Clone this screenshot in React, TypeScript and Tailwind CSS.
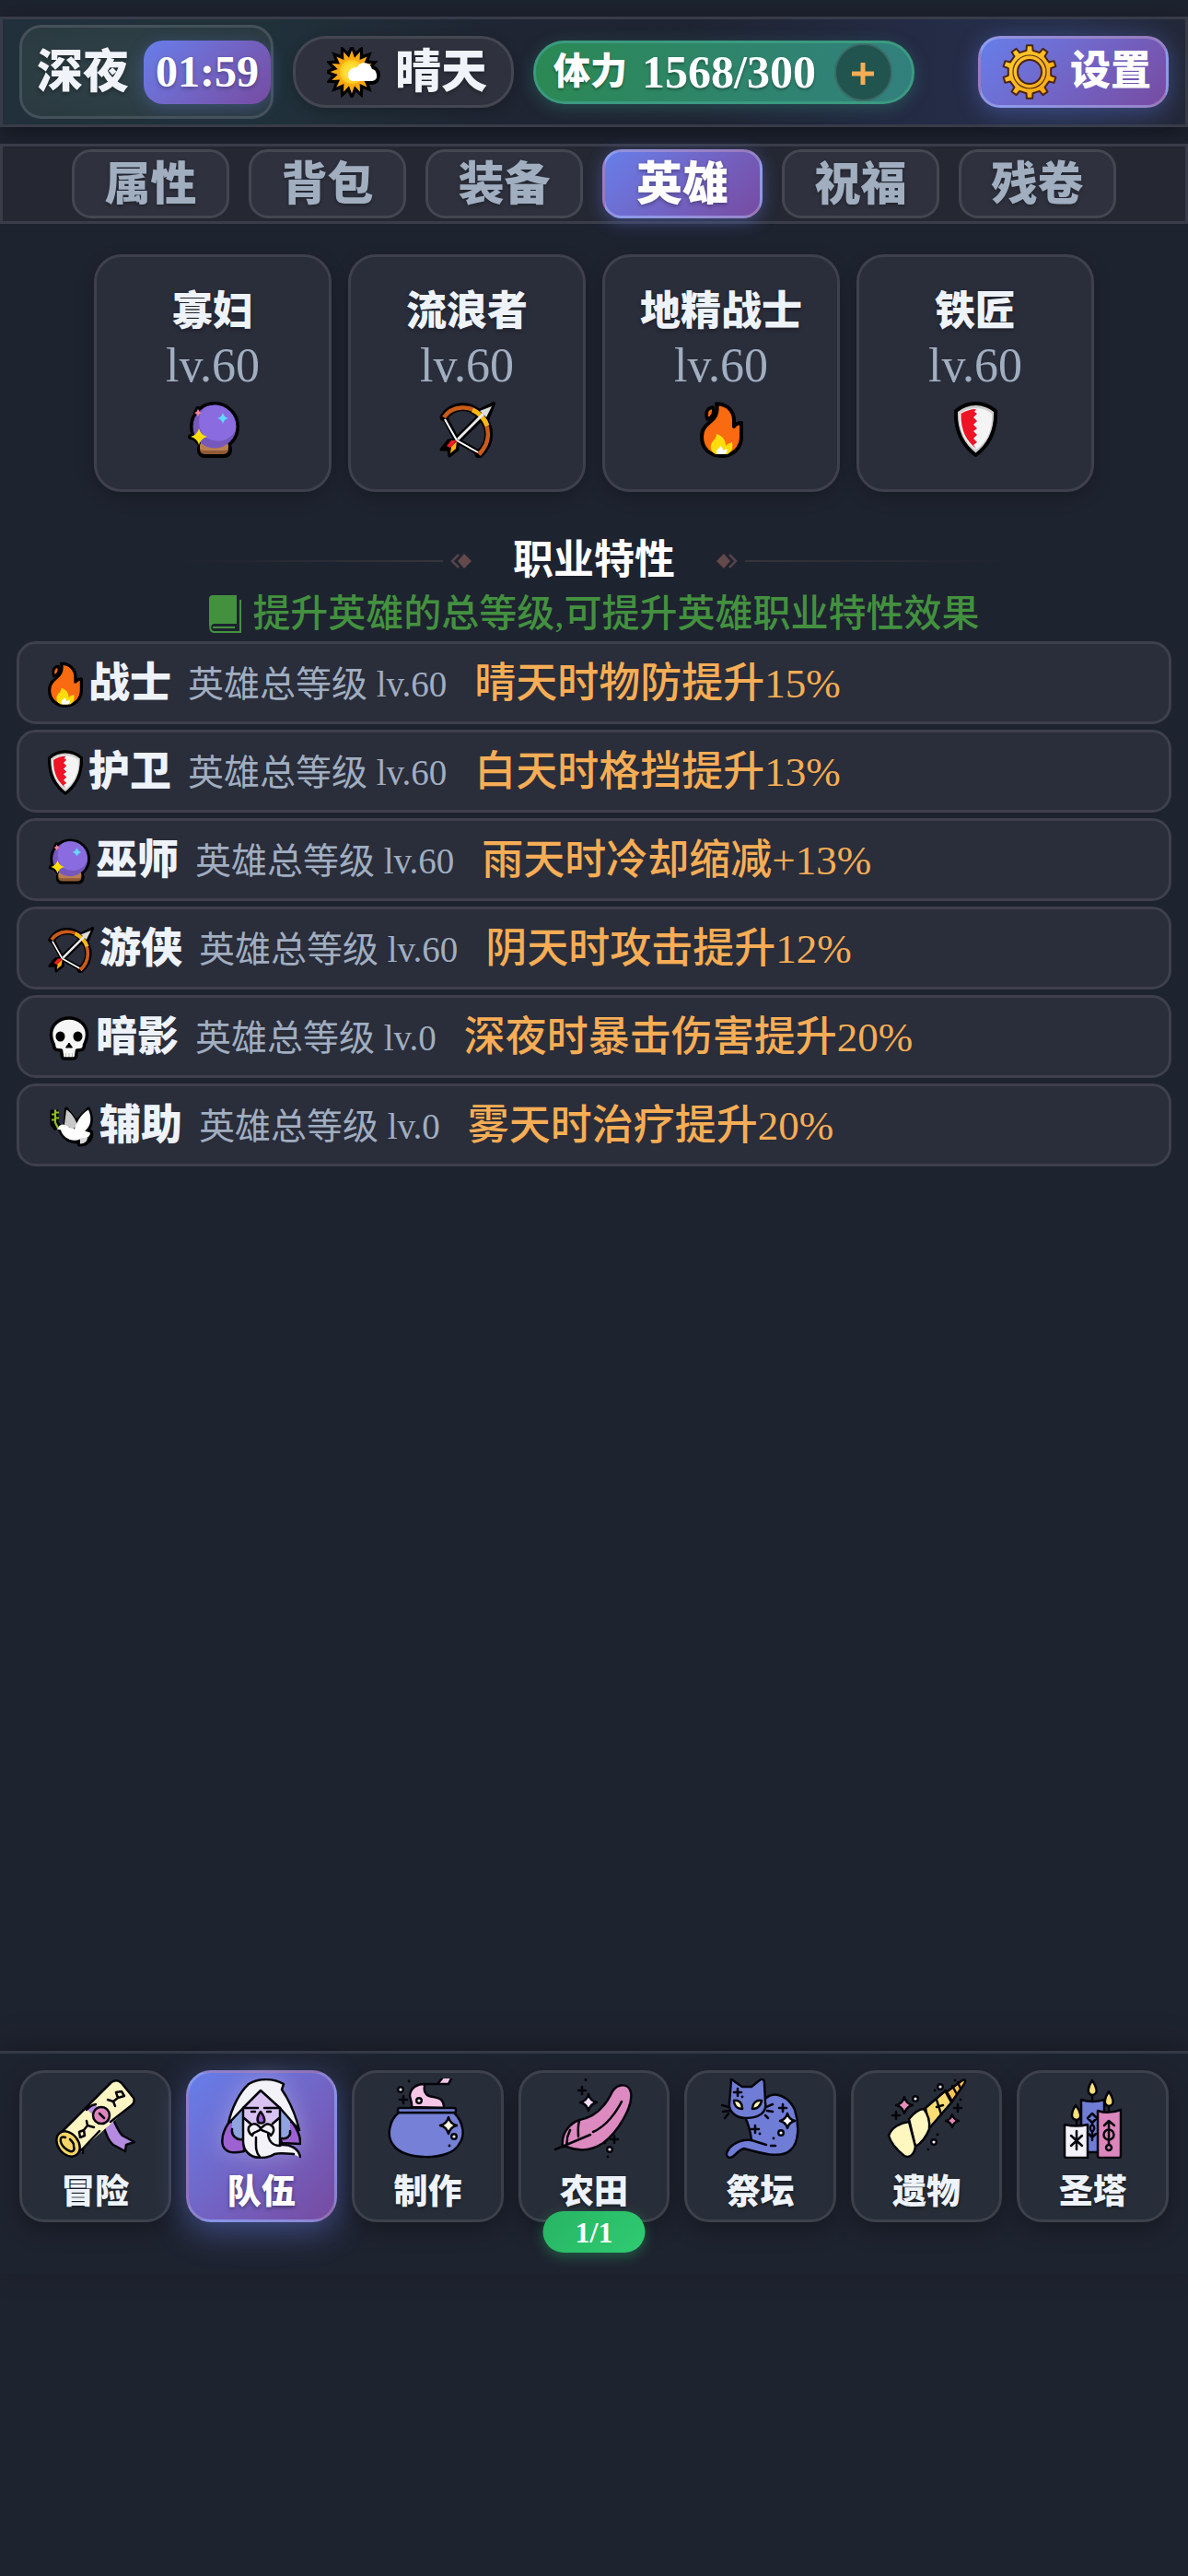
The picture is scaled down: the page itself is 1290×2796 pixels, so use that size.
import React from 'react';

type IconProps = { className?: string };

/* ---------- shared shapes ---------- */

function ring(count: number, outer: number, inner: number, cx: number, cy: number) {
  const points: string[] = [];
  for (let i = 0; i < count * 2; i++) {
    const r = i % 2 === 0 ? outer : inner;
    const a = (Math.PI * i) / count - Math.PI / 2;
    points.push(`${(cx + r * Math.cos(a)).toFixed(2)},${(cy + r * Math.sin(a)).toFixed(2)}`);
  }
  return points.join(' ');
}

function gearPoints(teeth: number, outer: number, inner: number, cx: number, cy: number) {
  const points: string[] = [];
  const step = (Math.PI * 2) / teeth;
  for (let i = 0; i < teeth; i++) {
    const mid = i * step - Math.PI / 2;
    const corners: [number, number][] = [
      [inner, -0.24],
      [outer, -0.17],
      [outer, 0.17],
      [inner, 0.24],
    ];
    corners.forEach(([r, k]) => {
      const a = mid + step * k;
      points.push(`${(cx + r * Math.cos(a)).toFixed(2)},${(cy + r * Math.sin(a)).toFixed(2)}`);
    });
  }
  return points.join(' ');
}

function Sparkle({ x, y, r, fill, stroke, sw = 0 }: { x: number; y: number; r: number; fill: string; stroke?: string; sw?: number }) {
  const k = r * 0.2;
  return (
    <path
      d={`M${x} ${y - r}Q${x + k} ${y - k} ${x + r} ${y}Q${x + k} ${y + k} ${x} ${y + r}Q${x - k} ${y + k} ${x - r} ${y}Q${x - k} ${y - k} ${x} ${y - r}Z`}
      fill={fill}
      stroke={stroke}
      strokeWidth={sw}
      strokeLinejoin="round"
    />
  );
}

function Plus({ x, y, r = 4 }: { x: number; y: number; r?: number }) {
  return <path d={`M${x - r} ${y}H${x + r}M${x} ${y - r}V${y + r}`} stroke="#05050c" strokeWidth="2.6" strokeLinecap="round" />;
}

function Bubble({ x, y }: { x: number; y: number }) {
  return <circle cx={x} cy={y} r="2.8" fill="#f4f0fa" stroke="#05050c" strokeWidth="2.4" />;
}

function Dot({ x, y }: { x: number; y: number }) {
  return <circle cx={x} cy={y} r="1.4" fill="#05050c" stroke="none" />;
}

/* ---------- class and weather icons ---------- */

function SunIcon({ className }: IconProps) {
  return (
    <svg viewBox="0 0 58 55" className={className} aria-hidden="true">
      <defs>
        <radialGradient id="sunCore">
          <stop offset="0.5" stopColor="#ffe23a" />
          <stop offset="1" stopColor="#ffc81e" />
        </radialGradient>
      </defs>
      <polygon points={ring(16, 25, 18, 27, 27)} fill="#000" stroke="#000" strokeWidth="5" strokeLinejoin="miter" />
      <path d="M28 38H49Q55 37 55 30Q54 24 49 23Q47 16 40 16Q34 17 33 22Q24 22 23 30Q23 37 28 38Z" stroke="#000" strokeWidth="6" />
      <polygon points={ring(16, 23.5, 15.5, 27, 27)} fill="#fba912" />
      <circle cx="27" cy="27" r="13" fill="url(#sunCore)" />
      <path d="M28 37H49Q55 36 54 30Q53 24 49 24Q47 17 40 17Q34 18 33 22Q24 22 23 30Q23 37 28 37Z" fill="#fff" />
    </svg>
  );
}

function GearIcon({ className }: IconProps) {
  return (
    <svg viewBox="0 0 60 60" className={className} aria-hidden="true">
      <defs>
        <linearGradient id="gearGold" x1="0" y1="0" x2="1" y2="1">
          <stop offset="0" stopColor="#ffcf33" />
          <stop offset="1" stopColor="#f5a30f" />
        </linearGradient>
      </defs>
      <path
        d={`M${gearPoints(10, 29, 23.5, 30, 30).split(' ').join('L')}ZM30 17A13 13 0 1 0 30 43A13 13 0 1 0 30 17Z`}
        fill="url(#gearGold)"
        fillRule="evenodd"
        stroke="#4a2312"
        strokeWidth="2"
        strokeLinejoin="round"
      />
      <circle cx="30" cy="30" r="18" fill="none" stroke="#5a2d12" strokeWidth="1.2" />
    </svg>
  );
}

function CrystalIcon({ className }: IconProps) {
  return (
    <svg viewBox="0 0 57 61" className={className} aria-hidden="true">
      <g fill="#000" stroke="#000" strokeWidth="8" strokeLinejoin="round">
        <circle cx="30" cy="27" r="23" />
        <rect x="15" y="47" width="30" height="10" rx="4" />
        <path d="M12 8L14 11L12 15L10 12ZM13 31L15 37L20 38L14 41L13 44L10 40L4 38L10 36Z" strokeWidth="6" />
      </g>
      <rect x="14" y="45" width="31" height="12" rx="5" fill="#8f5a35" />
      <rect x="14" y="44" width="31" height="9" rx="4" fill="#b97f51" />
      <circle cx="30" cy="27" r="23.5" fill="#7658bd" />
      <path d="M20 6C9 15 12 35 23 40C34 46 48 42 53 30C55 12 38-2 20 6Z" fill="#8a6ce0" />
      <Sparkle x={12} y={12} r={4} fill="#f4839c" />
      <Sparkle x={39} y={18} r={6} fill="#5edcff" />
      <Sparkle x={13} y={38} r={9} fill="#ffde0a" />
    </svg>
  );
}

function BowIcon({ className }: IconProps) {
  return (
    <svg viewBox="0 0 61 61" className={className} fill="none" aria-hidden="true">
      <g stroke="#000" strokeLinejoin="round">
        <path d="M5 17C14 3 33 2 44 14C57 27 57 45 43 57" strokeWidth="9" strokeLinecap="round" />
        <path d="M7 19L19 42L42 55" strokeWidth="6" />
        <path d="M19 42L49 13" strokeWidth="8" />
        <path d="M59 2L43 10L52 20Z" fill="#000" strokeWidth="4" />
        <path d="M2 52L10 42L20 41L20 52L11 59L10 52Z" fill="#000" strokeWidth="3" />
      </g>
      <path d="M5 17C14 4 33 3 44 14C56 27 56 45 43 57" stroke="#cb5b18" strokeWidth="4.5" />
      <path d="M36 9C43 12 50 19 52 26" stroke="#fbb914" strokeWidth="5" />
      <path d="M6 19L19 42L42 55" stroke="#fff" strokeWidth="2" />
      <path d="M20 41L48 13" stroke="#ececec" strokeWidth="3" />
      <path d="M57 5L44 10L51 17Z" fill="#dcdcdc" />
      <path d="M8 48L13 42L19 42L14 48L12 50Z" fill="#ed1c24" />
      <path d="M19 43L18 51L12 56L13 49Z" fill="#ffb017" />
      <path d="M43 57L46 54" stroke="#cb5b18" strokeWidth="4.5" />
    </svg>
  );
}

function FlameIcon({ className }: IconProps) {
  return (
    <svg viewBox="0 0 47 61" className={className} aria-hidden="true">
      <path d="M14 6C7 7 6 13 8 19C14 17 16 12 14 6Z" fill="#fa6a10" stroke="#000" strokeWidth="3.5" strokeLinejoin="round" />
      <path
        d="M18 2.500C30 2 37 11 37 20L37 27C39 24 41 23 45 23L45 38C45 50 36 59 24 59C11 59 2 51 2 38C2 25 13 23 17 15C19 11 19 7 18 2.500Z"
        fill="#fa6a10"
        stroke="#000"
        strokeWidth="4"
        strokeLinejoin="round"
      />
      <path d="M18 35C25 37 28 42 28 48C30 45 33 45 35 44C36 50 35 54 30 57L17 57C11 54 10 48 14 43C16 41 18 39 18 35Z" fill="#ffdd0a" />
      <path d="M22 48C24 49 25 51 25 53C27 52 28 52 29 51C30 54 29 56 27 57L19 57C17 54 18 52 20 51C21 50 22 49 22 48Z" fill="#fff" />
    </svg>
  );
}

function ShieldIcon({ className }: IconProps) {
  return (
    <svg viewBox="0 0 47 61" className={className} aria-hidden="true">
      <path d="M23.500 2C32 2 39 5 45 10C46 34 37 48 23.500 58C10 48 1 34 2 10C8 5 15 2 23.500 2Z" fill="#cfcfcf" stroke="#000" strokeWidth="4" strokeLinejoin="round" />
      <path d="M23.500 7C30 7 36 9 41 13C42 33 34 45 23.500 52C13 45 5 33 6 13C11 9 17 7 23.500 7Z" fill="#f4f4f4" />
      <path d="M24 8C18 8 12 10 7.500 13C7 32 14 43 24 51L21 47L25 44L21 40L25 36L21 32L25 29L21 25L25 21L21 17L25 13L22 11Z" fill="#ee1325" />
    </svg>
  );
}

function SkullIcon({ className }: IconProps) {
  return (
    <svg viewBox="0 0 43 48" className={className} aria-hidden="true">
      <path
        d="M21.500 2C33 2 41 10 41 20C41 26 39 28 38 31C38 36 36 37 30 37L29 44Q28 46 26 46L17 46Q14 46 14 44L13 37C7 37 5 36 5 31C4 28 2 26 2 20C2 10 10 2 21.500 2Z"
        fill="#f6f6f6"
        stroke="#000"
        strokeWidth="3.500"
        strokeLinejoin="round"
      />
      <ellipse cx="12" cy="22" rx="5" ry="5.500" />
      <ellipse cx="31" cy="22" rx="5" ry="5.500" />
      <path d="M21.500 29L25 34L22 34L21 34L18 34Z" stroke="#000" strokeLinejoin="round" />
      <path d="M18 40V44M21.500 40V44M25 40V44" stroke="#bcbcbc" strokeWidth="1" />
    </svg>
  );
}

function DoveIcon({ className }: IconProps) {
  return (
    <svg viewBox="0 0 50 45" className={className} aria-hidden="true">
      <g fill="#000" stroke="#000" strokeWidth="4" strokeLinejoin="round">
        <path d="M20 3L31 17L44 3C49 12 47 22 43 26L47 28C48 33 46 37 43 39C42 41 40 42 34 42L33 39C22 39 16 33 13 25L19 20Z" />
        <path d="M7 4V19L11 24" fill="none" strokeWidth="9" />
      </g>
      <path d="M20 4C26 8 30 14 32 21L27 25L18 20Z" fill="#c8c8c8" />
      <path d="M10 25C12 20 18 18 23 23L29 25C31 17 37 8 44 4C48 13 47 22 40 27L46 29C46 32 44 34 41 35L35 36C26 40 16 34 14 26Z" fill="#fff" />
      <path d="M35 35L43 34C43 38 40 41 35 41Z" fill="#dadada" />
      <path d="M8 4V18L11 24M4 9H8M4 15H8M8 7H12M8 13H12" fill="none" stroke="#8dc21f" strokeWidth="2.200" />
    </svg>
  );
}

function BookIcon({ className }: IconProps) {
  return (
    <svg viewBox="0 0 36 41" className={className} fill="none" aria-hidden="true">
      <path d="M5 0H31V31H7C4 31 2 32 1 34V4Q1 0 5 0Z" fill="currentColor" />
      <path d="M31 30H6C1 31 1 39 6 40H35V5" stroke="currentColor" strokeWidth="2" />
      <path d="M5 35H29" stroke="currentColor" strokeWidth="2" />
    </svg>
  );
}

/* ---------- bottom navigation icons ---------- */

function ScrollIcon({ className }: IconProps) {
  return (
    <svg viewBox="0 0 87 87" className={className} fill="none" stroke="#05050c" strokeWidth="2.500" strokeLinecap="round" strokeLinejoin="round" aria-hidden="true">
      <path d="M52 50C55 61 59 69 63 72L76 79L77 72L86 69L73 62C68 57 65 49 62 42Z" fill="#b48be0" />
      <path d="M4 61L61 3Q67 0 72 5L85 21Q87 26 83 29L30 76V81L26 77Z" fill="#fdf6c3" stroke="none" />
      <path d="M4 61L61 4Q67 0 72 5L85 21Q87 26 83 29L60 47M48 57L30 76M30 81V76L26 79" />
      <path d="M34 33L43 28L60 46L52 51Z" fill="#b48be0" stroke="none" />
      <path d="M34 34Q38 29 44 28" />
      <circle cx="50" cy="40" r="9" fill="#dc86bd" />
      <path d="M48 38L53 43" />
      <ellipse cx="14" cy="71" rx="11" ry="15" transform="rotate(-38 14 71)" fill="#f7d667" />
      <path d="M11 64C4 61 4 70 11 76C17 81 22 80 20 73M16 66C18 68 20 70 20 72" />
      <path d="M66 15L72 14L75 19L68 21ZM68 21L63 25L57 23M63 25L65 30" />
      <path d="M26 58L31 56L32 62L27 64ZM31 56L35 51L42 53M35 51L34 46" />
    </svg>
  );
}

function WizardIcon({ className }: IconProps) {
  return (
    <svg viewBox="0 0 87 87" className={className} fill="none" stroke="#05050c" strokeWidth="2.500" strokeLinecap="round" strokeLinejoin="round" aria-hidden="true">
      <path d="M9 47C2 57 0 65 2 73C6 82 16 81 25 79V64H64L66 70L86 71C87 62 82 54 77 47Z" fill="#9d61d2" />
      <path d="M12 46L24 32V66C17 67 12 63 12 56ZM64 32L75 46V65C70 66 66 65 64 63Z" fill="#8fa3e0" stroke="none" />
      <path d="M12 55C11 62 17 67 23 66M75 57C76 62 72 66 66 65" />
      <path d="M43 12L24 32V52H64V32Z" fill="#d9c3f2" stroke="none" />
      <path d="M24 32V44L32 52C38 47 49 47 55 52L64 44V74C72 72 82 75 86 86C76 79 68 83 58 82C50 88 34 88 27 80C24 76 23 70 24 60Z" fill="#f3f2f8" stroke="none" />
      <path d="M30 6C42-1 57 0 68 6L66 12L71 20C76 29 82 43 85 56L64 32L43 13L24 32L8 49C11 33 20 15 30 6Z" fill="#f3f2f8" />
      <path d="M24 32V68C24 78 31 86 43 86C51 86 57 83 58 82C66 80 71 82 79 82M64 32V72C74 71 84 75 86 85M64 73C56 73 51 68 51 58" />
      <path d="M24 32H40M47 32H64M33 36H37M50 36H54M25 43L32 49M63 43L56 49M38 64C38 73 37 79 42 85" />
      <path d="M43 36C40 40 39 44 40 47C42 49 45 49 47 47C48 44 46 40 43 36Z" fill="#9d61d2" />
      <path d="M43 54C37 46 32 50 30 53C29 57 31 60 34 62C34 57 40 59 43 55C47 59 53 57 54 62C57 59 58 55 56 52C51 47 48 50 43 54Z" fill="#f3f2f8" />
    </svg>
  );
}

function CauldronIcon({ className }: IconProps) {
  return (
    <svg viewBox="0 0 87 87" className={className} fill="none" stroke="#05050c" strokeWidth="2.500" strokeLinecap="round" strokeLinejoin="round" aria-hidden="true">
      <path d="M26 31C27 26 24 22 24 18C25 10 32 6 39 6C42 8 37 12 42 17C46 23 61 16 61 32Z" fill="#f5c6e6" />
      <path d="M54 6L59 0H69L66 6Z" fill="#f5c6e6" stroke="none" />
      <path d="M54 6L59 0M69 0L66 6H39" />
      <path d="M12 37C2 45-2 62 6 72C16 89 67 90 77 72C85 62 82 47 72 37Z" fill="#7580d6" />
      <rect x="11" y="32" width="63" height="5" rx="2" fill="#7580d6" />
      <Bubble x={34} y={24} />
      <Bubble x={14} y={12} />
      <Plus x={17} y={23} />
      <Dot x={23} y={3} />
      <Sparkle x={66} y={51} r={9} fill="#fff8dd" stroke="#05050c" sw={2.5} />
      <Bubble x={72} y={63} />
      <Dot x={67} y={73} />
    </svg>
  );
}

function FeatherIcon({ className }: IconProps) {
  return (
    <svg viewBox="0 0 87 87" className={className} fill="none" stroke="#05050c" strokeWidth="2.500" strokeLinecap="round" strokeLinejoin="round" aria-hidden="true">
      <path d="M10 74C8 60 17 49 28 45C46 42 57 29 64 14C70 5 82 5 84 15C87 30 70 58 54 70C39 80 24 78 14 74Z" fill="#dc8ac0" />
      <path d="M2 77L14 72L40 61M43 58C57 52 68 37 74 25M15 64L18 56M28 46C26 52 27 58 27 63M15 66L14 73" />
      <Sparkle x={38} y={26} r={9} fill="#f4ddf6" stroke="#05050c" sw={2.5} />
      <Plus x={31} y={13} />
      <Dot x={35} y={1.5} />
      <Plus x={66} y={66} />
      <Bubble x={61} y={77} />
      <Dot x={56} y={70} />
      <Dot x={59} y={85} />
    </svg>
  );
}

function CatIcon({ className }: IconProps) {
  return (
    <svg viewBox="0 0 87 87" className={className} fill="none" stroke="#05050c" strokeWidth="2.500" strokeLinecap="round" strokeLinejoin="round" aria-hidden="true">
      <path d="M50 21C60 13 75 20 81 34C86 50 86 70 76 78C66 88 40 80 26 76C18 78 16 86 10 86C4 84 8 76 14 72C20 68 27 66 34 67C33 58 31 50 27 42Z" fill="#6f7dd6" />
      <path d="M34 67L50 72M55 73H60" />
      <path d="M12 2C11 0 13 0 15 3L24 9H34L44 1Q48 0 48 5L49 26C51 37 42 43 28 43C16 43 9 35 10 27Z" fill="#6f7dd6" />
      <path d="M15 24C21 23 24 27 24 33C18 33 15 29 15 24ZM45 24C39 23 35 27 35 33C41 33 44 29 45 24Z" fill="#fff6bd" />
      <path d="M2 29L9 31M3 36L10 35M5 43L9 38M50 31L57 28M51 35L57 36M49 40L52 43" />
      <Plus x={19} y={15} />
      <Dot x={24} y={20} />
      <Plus x={68} y={32} />
      <Plus x={38} y={55} />
      <Dot x={43} y={60} />
      <Sparkle x={73} y={46} r={8} fill="#fff" stroke="#05050c" sw={2.5} />
      <Bubble x={66} y={59} />
      <Dot x={58} y={65} />
    </svg>
  );
}

function HornIcon({ className }: IconProps) {
  return (
    <svg viewBox="0 0 87 87" className={className} fill="none" stroke="#05050c" strokeWidth="2.500" strokeLinecap="round" strokeLinejoin="round" aria-hidden="true">
      <path d="M63 16L82 2Q87 0 84 6L70 26Z" fill="#f9c44d" />
      <path d="M42 32L64 13L71 25L46 54Z" fill="#fbdd72" />
      <path d="M24 44Q33 33 40 33C44 38 47 46 46 55Q41 68 31 74Z" fill="#fff6c0" />
      <path d="M2 62C5 53 15 48 24 47L31 74C30 82 25 87 19 84C9 76 4 69 2 62Z" fill="#fff6c0" />
      <path d="M54 23L59 39M63 13L70 26M71 8L76 17M77 4L80 11M54 31L61 29" />
      <Sparkle x={19} y={29} r={9} fill="#e58cb9" stroke="#05050c" sw={2.5} />
      <Bubble x={31} y={22} />
      <Plus x={10} y={40} />
      <Bubble x={58} y={9} />
      <Dot x={52} y={13} />
      <Dot x={74} y={2} />
      <Dot x={80} y={23} />
      <Plus x={77} y={32} />
      <Sparkle x={71} y={46} r={7} fill="#e58cb9" stroke="#05050c" sw={2.5} />
      <Bubble x={51} y={69} />
      <Dot x={55} y={61} />
      <Dot x={45} y={77} />
    </svg>
  );
}

function CandlesIcon({ className }: IconProps) {
  return (
    <svg viewBox="0 0 87 87" className={className} fill="none" stroke="#05050c" strokeWidth="2.500" strokeLinecap="round" strokeLinejoin="round" aria-hidden="true">
      <path d="M43 17V23M26 45V50M61 29V35" />
      <path d="M43 2C47 8 51 17 43 18C36 17 39 8 43 2ZM61 14C65 20 69 29 61 30C54 29 57 20 61 14ZM25 29C30 35 33 44 26 45C18 44 21 35 25 29Z" fill="#fbe07c" />
      <path d="M31 23Q43 27 56 23V80H31Z" fill="#6f7dd6" />
      <path d="M43 38L48 43L43 48L38 43ZM43 48V50C46 52 46 55 43 58C40 55 40 52 43 50M39 60L43 64L47 60M43 58V67" />
      <path d="M49 35Q61 39 74 34V84Q74 86 72 86H51Q49 86 49 84Z" fill="#dc86bd" />
      <path d="M56 51L61 46L67 51M61 47V72" />
      <circle cx="61" cy="61" r="5.500" />
      <circle cx="61" cy="75" r="3" />
      <path d="M13 50Q26 53 38 50V86H15Q13 86 13 84Z" fill="#f4f2fa" />
      <path d="M26 57V77M20 62L32 73M32 62L20 73" />
    </svg>
  );
}

/* ---------- data ---------- */

type Icon = (p: IconProps) => React.JSX.Element;

const tabs = ['属性', '背包', '装备', '英雄', '祝福', '残卷'];
const activeTab = '英雄';

const heroes: { name: string; level: number; Icon: Icon }[] = [
  { name: '寡妇', level: 60, Icon: CrystalIcon },
  { name: '流浪者', level: 60, Icon: BowIcon },
  { name: '地精战士', level: 60, Icon: FlameIcon },
  { name: '铁匠', level: 60, Icon: ShieldIcon },
];

const traits: { name: string; level: number; effect: string; Icon: Icon; size: string }[] = [
  { name: '战士', level: 60, effect: '晴天时物防提升15%', Icon: FlameIcon, size: 'h-[50px] w-[38px]' },
  { name: '护卫', level: 60, effect: '白天时格挡提升13%', Icon: ShieldIcon, size: 'h-[50px] w-[38px]' },
  { name: '巫师', level: 60, effect: '雨天时冷却缩减+13%', Icon: CrystalIcon, size: 'h-[50px] w-[46px]' },
  { name: '游侠', level: 60, effect: '阴天时攻击提升12%', Icon: BowIcon, size: 'h-[50px] w-[50px]' },
  { name: '暗影', level: 0, effect: '深夜时暴击伤害提升20%', Icon: SkullIcon, size: 'h-[48px] w-[46px]' },
  { name: '辅助', level: 0, effect: '雾天时治疗提升20%', Icon: DoveIcon, size: 'h-[46px] w-[50px]' },
];

const navItems: { name: string; Icon: Icon; badge?: string }[] = [
  { name: '冒险', Icon: ScrollIcon },
  { name: '队伍', Icon: WizardIcon },
  { name: '制作', Icon: CauldronIcon },
  { name: '农田', Icon: FeatherIcon, badge: '1/1' },
  { name: '祭坛', Icon: CatIcon },
  { name: '遗物', Icon: HornIcon },
  { name: '圣塔', Icon: CandlesIcon },
];
const activeNav = '队伍';

/* ---------- sections ---------- */

function Header() {
  return (
    <header className="flex h-[120px] items-center border-[3px] border-[#383c48] bg-[linear-gradient(90deg,#21303a_0%,#20313a_22%,#1f2532_42%,#1f2432_58%,#242b45_78%,#262f4a_90%,#232838_100%)] px-[18px] shadow-[0_6px_24px_rgba(0,0,0,0.4)]">
      <div className="mr-[21px] flex h-[102px] items-center gap-4 rounded-3xl border-[3px] border-[#455158] bg-[radial-gradient(ellipse_at_center,#304349,#2a3940)] pl-4 text-[50px] font-black leading-none text-[#f0f4fa]">
        <span className="[text-shadow:0_2px_4px_rgba(0,0,0,0.4)]">深夜</span>
        <time className="flex h-[69px] w-[138px] items-center justify-center rounded-[21px] bg-linear-135 from-[#667eea] to-[#764ba2] text-[48px] text-white shadow-[0_4px_18px_rgba(102,126,234,0.3)] [text-shadow:0_2px_4px_rgba(0,0,0,0.3)]">
          01:59
        </time>
      </div>
      <div className="mr-[21px] flex h-[78px] items-center gap-4 rounded-[36px] border-[3px] border-[#444752] bg-[#2f323e] pl-[34px] pr-[26px] text-[50px] font-black leading-none text-[#f0f4fa] shadow-[0_4px_14px_rgba(0,0,0,0.2)]">
        <SunIcon className="h-[55px] w-[58px]" />
        <span className="[text-shadow:0_2px_4px_rgba(0,0,0,0.4)]">晴天</span>
      </div>
      <div className="flex h-[69px] items-center rounded-[34px] border-[3px] border-[#3b9a80] bg-linear-90 from-[#2b8954] to-[#32807e] pl-[19px] pr-[21px] font-black leading-none text-white shadow-[0_4px_18px_rgba(56,178,150,0.28)] [text-shadow:0_2px_3px_rgba(0,0,0,0.35)]">
        <span className="text-[40px]">体力</span>
        <span className="ml-4 text-[50px]">1568/300</span>
        <button type="button" aria-label="增加体力" className="ml-5 flex size-[63px] items-center justify-center rounded-full border-[2px] border-[#3b6a66] bg-[#21534f]">
          <svg viewBox="0 0 24 24" className="mt-1 size-6" aria-hidden="true">
            <path d="M12 0V24M0 12H24" stroke="#f6ad55" strokeWidth="5" />
          </svg>
        </button>
      </div>
      <button type="button" className="ml-auto flex h-[78px] items-center gap-[14px] rounded-3xl border-[3px] border-white/25 bg-linear-135 from-[#667eea] to-[#764ba2] pl-[23px] pr-4 text-[44px] font-black leading-none text-white shadow-[0_4px_24px_rgba(102,126,234,0.4)]">
        <GearIcon className="size-[60px]" />
        <span>设置</span>
      </button>
    </header>
  );
}

function Tabs() {
  return (
    <nav aria-label="角色" className="mt-[18px] flex justify-center gap-[21px] border-[3px] border-[#3a3d49] bg-[#252833] p-[3px]">
      {tabs.map((tab) => (
        <button
          key={tab}
          type="button"
          aria-current={tab === activeTab ? 'page' : undefined}
          className={
            tab === activeTab
              ? 'h-[75px] min-w-[174px] rounded-[21px] border-[3px] border-white/25 bg-linear-135 from-[#667eea] to-[#764ba2] text-[50px] font-black leading-none text-white shadow-[0_4px_18px_rgba(102,126,234,0.4)] [text-shadow:0_2px_4px_rgba(0,0,0,0.3)]'
              : 'h-[75px] min-w-[171px] rounded-[21px] border-[3px] border-[#444752] bg-[#2f323e] text-[50px] font-black leading-none text-[#a0aec0] [text-shadow:0_2px_4px_rgba(0,0,0,0.3)]'
          }
        >
          {tab}
        </button>
      ))}
    </nav>
  );
}

function HeroCards() {
  return (
    <section className="mx-auto mt-[33px] grid w-full max-w-[1086px] grid-cols-4 gap-[18px]">
      {heroes.map(({ name, level, Icon }) => (
        <button
          key={name}
          type="button"
          className="flex h-[258px] flex-col items-center rounded-[30px] border-[3px] border-[#3e414d] bg-[#2a2d3a] pt-[30px] shadow-[0_6px_18px_rgba(0,0,0,0.22)]"
        >
          <span className="text-[44px] font-black leading-[60px] text-[#eef3fa] [text-shadow:0_2px_4px_rgba(0,0,0,0.3)]">{name}</span>
          <span className="text-[52px] leading-[56px] text-[#a0aec0]">lv.{level}</span>
          <Icon className="mt-[11px] h-[61px]" />
        </button>
      ))}
    </section>
  );
}

function Ornament({ mirrored = false }: { mirrored?: boolean }) {
  return (
    <span className={mirrored ? 'flex w-80 rotate-180 items-center gap-2' : 'flex w-80 items-center gap-2'} aria-hidden="true">
      <span className="h-[2px] flex-1 bg-linear-90 from-transparent to-[#37343b]" />
      <svg viewBox="0 0 24 16" className="h-4 w-6" fill="none">
        <path d="M9 1L2 8L9 15" stroke="#57444a" strokeWidth="2.500" />
        <path d="M15 0L23 8L15 16L8 8Z" fill="#64494a" />
      </svg>
    </span>
  );
}

function Traits() {
  return (
    <section className="mt-[45px]">
      <div className="flex items-center justify-center gap-11">
        <Ornament />
        <h2 className="text-[44px] font-bold leading-[60px] text-white">职业特性</h2>
        <Ornament mirrored />
      </div>
      <p className="flex items-center justify-center gap-3 text-[41px] font-medium leading-[54px] text-[#43913f]">
        <BookIcon className="h-[41px] w-9" />
        <span>提升英雄的总等级,可提升英雄职业特性效果</span>
      </p>
      <ul className="mx-[18px] mt-[3px] flex flex-col gap-[6px]">
        {traits.map(({ name, level, effect, Icon, size }) => (
          <li key={name} className="flex h-[90px] items-center rounded-[21px] border-[3px] border-[#3e414d] bg-[#2a2d3a] pl-[31px] pt-[3px] leading-none">
            <Icon className={size} />
            <span className="ml-[6px] text-[45px] font-black text-[#eef3fa]">{name}</span>
            <span className="ml-[18px] text-[39px] text-[#a0aec0]">英雄总等级 lv.{level}</span>
            <span className="ml-[30px] text-[45px] font-medium text-[#f6ad55]">{effect}</span>
          </li>
        ))}
      </ul>
    </section>
  );
}

function BottomNav() {
  return (
    <nav aria-label="主菜单" className="mb-[328px] grid grid-cols-7 gap-4 border-t-[3px] border-[#353945] bg-[#1e2330] px-[21px] pb-[56px] pt-[18px] shadow-[0_-6px_30px_rgba(0,0,0,0.25)]">
      {navItems.map(({ name, Icon, badge }) => (
        <button
          key={name}
          type="button"
          aria-current={name === activeNav ? 'page' : undefined}
          className={
            name === activeNav
              ? 'relative flex h-[165px] flex-col items-center rounded-[27px] border-[3px] border-white/20 bg-linear-135 from-[#667eea] to-[#764ba2] pt-[6px] text-white shadow-[0_10px_36px_rgba(102,126,234,0.45)]'
              : 'relative flex h-[165px] flex-col items-center rounded-[27px] border-[3px] border-[#3c414b] bg-[#282e39] pt-[6px] text-[#eef3fa] shadow-[0_8px_24px_rgba(0,0,0,0.3)]'
          }
        >
          <Icon className={name === activeNav ? 'size-[87px] drop-shadow-[0_0_12px_rgba(255,255,255,0.25)]' : 'size-[87px]'} />
          <span className="mt-3 text-[37px] font-black leading-[50px] [text-shadow:0_2px_4px_rgba(0,0,0,0.4)]">{name}</span>
          {badge && (
            <span className="absolute -bottom-9 left-1/2 flex h-[45px] w-[111px] -translate-x-1/2 items-center justify-center rounded-full bg-linear-135 from-[#28b463] to-[#2ecc71] text-[32px] font-bold leading-none text-white shadow-[0_4px_14px_rgba(46,204,113,0.35)]">
              {badge}
            </span>
          )}
        </button>
      ))}
    </nav>
  );
}

export default function App() {
  return (
    <div className="flex min-h-screen flex-col bg-[#1e2330] pt-[18px] font-['Liberation_Serif','Noto_Sans_CJK_SC',serif]" lang="zh-CN">
      <Header />
      <Tabs />
      <main className="flex-1">
        <HeroCards />
        <Traits />
      </main>
      <BottomNav />
    </div>
  );
}
